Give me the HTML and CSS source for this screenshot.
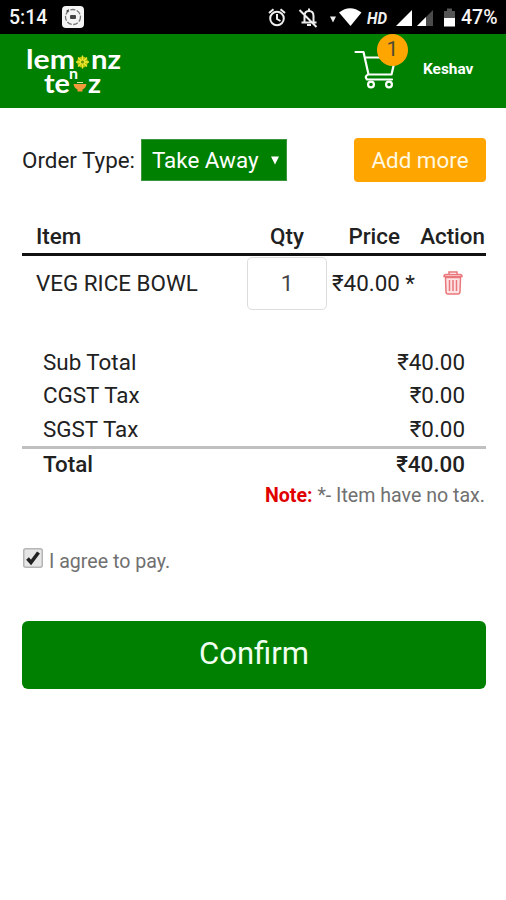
FILE: index.html
```html
<!DOCTYPE html>
<html lang="en">
<head>
<meta charset="utf-8">
<title>Lemonz n Teaz</title>
<link rel="stylesheet" href="styles.css">
</head>
<body>
<div class="status">
  <span class="clock">5:14</span>
  <svg class="app-icon" width="22" height="22" viewBox="0 0 22 22"><rect width="22" height="22" rx="4" fill="#f4f4f4"/><circle cx="11" cy="11" r="7.5" fill="none" stroke="#777" stroke-width="1.3" stroke-dasharray="5 1.5"/><rect x="8" y="9" width="6" height="4" rx="1" fill="#444"/><path d="M4 5l3-2-1 3z" fill="#333"/></svg>
  <svg class="status-icons" width="192" height="34" viewBox="0 0 192 34">
    <g fill="none" stroke="#eee" stroke-width="2">
      <circle cx="11" cy="18.5" r="6.8"/><path d="M3 13l4.500-3.800M19 13l-4.500-3.800M11 14v5l3.500 2"/>
      <path d="M38.500 22.500V16c0-3 1.500-5 4.500-5s4.500 2 4.500 5v6.500M35.500 22.500h15M43 8.500v2M41 25h4M33.500 10l17 17"/>
    </g>
    <path d="M64 16.500h6l-3 6z" fill="#eee"/>
    <path d="M73 12.500Q84 4 95.500 12.500L84.500 26z" fill="#fff"/>
    <path d="M130 26h16V10z" fill="#fff"/>
    <path d="M151 26h16V10z" fill="#4b4b4b"/><path d="M151 26h9V17z" fill="#fff"/>
    <path d="M178 11h3V8.500h5V11h3v7h-11z" fill="#555"/><path d="M178 18h11v8.500h-11z" fill="#fff"/>
    <text class="hd" x="101" y="23.500" textLength="20" lengthAdjust="spacingAndGlyphs">HD</text>
  </svg>
  <span class="battery">47%</span>
</div>
<header class="topbar">
  <svg class="logo" width="100" height="54" viewBox="0 0 100 54">
    <g class="logo-text">
      <text x="4" y="25" textLength="49" lengthAdjust="spacingAndGlyphs">lem</text>
      <text x="69" y="25" textLength="30" lengthAdjust="spacingAndGlyphs">nz</text>
      <text x="22" y="48.500" textLength="26" lengthAdjust="spacingAndGlyphs">te</text>
      <text x="66" y="48.500" textLength="13" lengthAdjust="spacingAndGlyphs">z</text>
      <text class="logo-n" x="47" y="35" textLength="9" lengthAdjust="spacingAndGlyphs">n</text>
    </g>
    <circle cx="60.500" cy="18" r="5.500" fill="#b9c400"/><path d="M60.500 11.500v13M54 18h13M56 13.500l9 9M65 13.500l-9 9" stroke="#efe83a" stroke-width="1.300"/><circle cx="60.500" cy="18" r="1.500" fill="#658d00"/>
    <path d="M51.500 40h13q-.5 4-4 5.500v2h-5v-2q-3.500-1.500-4-5.500z" fill="#f29a3b"/><path d="M55 38.500h6" stroke="#cfe6b0" stroke-width="1"/>
  </svg>
  <div class="cart">
    <svg width="42" height="42" viewBox="0 0 42 42" fill="none" stroke="#fff" stroke-width="2.200" stroke-linecap="round" stroke-linejoin="round"><path d="M1.500 3h8l5 22.500h23l4-17H11.500M14.500 25.500q-4.500 1.500-1.500 5h25"/><circle cx="17" cy="35.500" r="2.900"/><circle cx="35" cy="35.500" r="2.900"/></svg>
    <span class="badge">1</span>
  </div>
  <span class="user">Keshav</span>
</header>
<main>
  <div class="order">
    <span class="order-label">Order Type:</span>
    <div class="select"><span class="select-value">Take Away</span><svg width="8" height="9" viewBox="0 0 8 9"><path d="M0 .5h8L4 8.500z" fill="#fff"/></svg></div>
    <button class="add">Add more</button>
  </div>
  <div class="row head"><span>Item</span><span class="qty">Qty</span><span class="price">Price</span><span class="action">Action</span></div>
  <div class="row item">
    <span class="name">VEG RICE BOWL</span>
    <input class="field" value="1" aria-label="Quantity">
    <span class="cost">₹40.00 *</span>
    <svg class="trash" width="20" height="24" viewBox="0 0 20 24" fill="none" stroke="#e9777b" stroke-width="1.500"><path d="M2.500 6.500h15l-.5 14.500q-.2 2-2 2H5q-1.800 0-2-2z" fill="#fde3e3"/><path d="M1 5.500q0-2 2-2h14q2 0 2 2zM6 3V1h8v2M6.500 9v11M10 9v11M13.500 9v11"/></svg>
  </div>
  <div class="summary">
    <div class="line"><span>Sub Total</span><span>₹40.00</span></div>
    <div class="line"><span>CGST Tax</span><span>₹0.00</span></div>
    <div class="line"><span>SGST Tax</span><span>₹0.00</span></div>
    <div class="line total"><span>Total</span><span>₹40.00</span></div>
  </div>
  <p class="note"><b>Note:</b> *- Item have no tax.</p>
  <div class="agree">
    <svg width="20" height="20" viewBox="0 0 20 20"><rect x=".75" y=".75" width="18.500" height="18.500" rx="2" fill="#e6e6e6" stroke="#b5b5b5" stroke-width="1.500"/><path d="M4.500 10.500l3.500 4 7.500-10" fill="none" stroke="#222" stroke-width="3.600"/></svg>
    <span>I agree to pay.</span>
  </div>
  <button class="confirm">Confirm</button>
</main>
</body>
</html>
```
FILE: styles.css
```css
* { box-sizing: border-box; }
body { margin: 0; background: #fff; color: #212121; font-family: Roboto, "Noto Sans", sans-serif; font-size: 22.4px; }
button, input { font: inherit; }
.status { height: 34px; background: #000; color: #f5f5f5; display: flex; align-items: center; padding-left: 9px; }
.clock { width: 53px; font-size: 19.5px; font-weight: 500; padding-top: 1px; }
.status-icons { margin-left: 182px; }
.hd { font: italic bold 16px Roboto, sans-serif; fill: #eee; }
.battery { margin-left: 3px; font-size: 19.5px; font-weight: 500; padding-top: 1px; }
.topbar { height: 74px; background: #008000; display: flex; align-items: flex-start; color: #fff; }
.logo { margin: 10px 0 0 22px; }
.logo-text { font: bold 26px Lato, sans-serif; fill: #fff; }
.logo-n { font-size: 15px; }
.cart { position: relative; margin: 15px 0 0 232px; height: 42px; }
.badge { position: absolute; left: 23px; top: -15px; width: 31px; height: 32px; border-radius: 50%; background: #ffa500; color: #4f4a35; font-size: 21px; line-height: 31px; text-align: center; }
.user { margin: 26px 0 0 27px; font-size: 15.4px; font-weight: 700; line-height: 19px; }
main { padding: 30px 20px 0 22px; }
.order { display: flex; align-items: center; height: 44px; }
.order-label { width: 119px; white-space: nowrap; }
.select { display: flex; align-items: center; justify-content: space-between; width: 146px; height: 42px; padding: 0 7px 0 10px; background: #008000; border: 1px solid #3d963d; color: #fff; }
.select-value { white-space: nowrap; }
.add { margin-left: auto; width: 132px; height: 44px; padding: 0; border: 0; border-radius: 4px; background: #ffa500; color: #fff8e0; }
.row { display: grid; grid-template-columns: 225px 80px 1fr 66px; align-items: center; }
.head { margin-top: 38px; height: 36px; padding-bottom: 2px; border-bottom: 3px solid #111; font-weight: 500; }
.head span:first-child, .name { padding-left: 14px; }
.qty { text-align: center; }
.price { justify-self: end; padding-right: 20px; }
.action { justify-self: end; padding-right: 1px; white-space: nowrap; }
.item { height: 54px; }
.field { width: 80px; height: 53px; border: 1.5px solid #ddd; border-radius: 5px; text-align: center; color: #444; padding: 0; }
.cost { padding-left: 5px; white-space: nowrap; }
.trash { justify-self: center; }
.summary { margin-top: 35px; }
.line { display: flex; justify-content: space-between; align-items: center; height: 33.5px; padding: 0 21px; }
.total { height: 35px; padding-bottom: 1px; border-top: 3px solid #c0c0c0; font-weight: 500; }
.note { margin: 0; height: 28px; line-height: 29px; font-size: 19.6px; text-align: right; color: #707070; padding-right: 1px; }
.note b { color: #e00000; font-weight: 700; }
.agree { display: flex; gap: 6px; margin: 39.5px 0 0 1px; height: 28px; font-size: 19.6px; color: #707070; }
.agree span { line-height: 28px; }
.confirm { display: block; width: 464px; height: 68px; margin-top: 45px; padding: 0 0 3px; border: 0; border-radius: 6px; background: #008000; color: #f1fff1; font-size: 31px; }
```
